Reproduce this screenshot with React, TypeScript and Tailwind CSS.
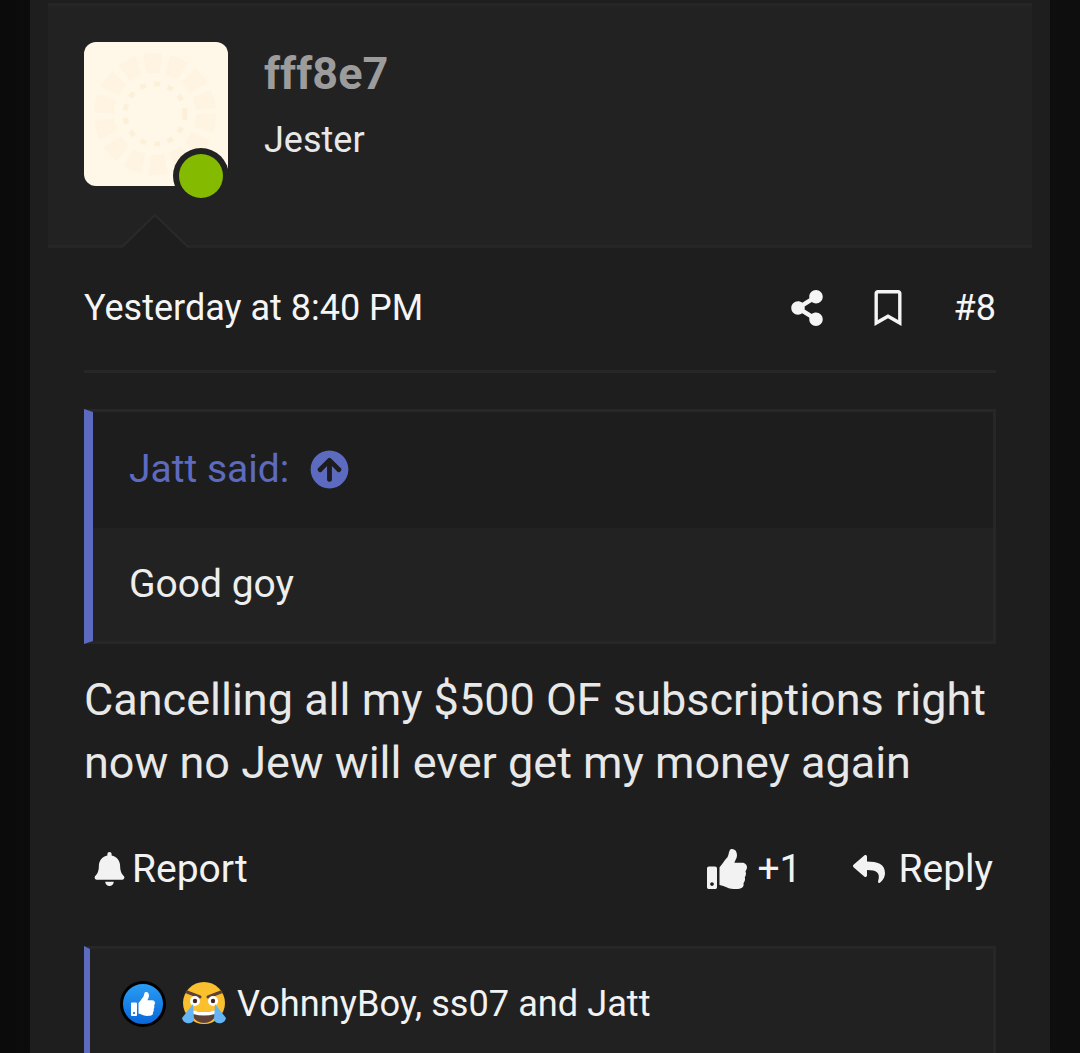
import { FaArrowCircleUp, FaBell, FaRegBookmark, FaReply, FaShareAlt, FaThumbsUp } from "react-icons/fa";

function Avatar() {
  return (
    <div className="relative h-[144px] w-[144px] shrink-0">
      <div className="h-full w-full overflow-hidden rounded-[12px] bg-[#fff7e8]">
        <svg viewBox="0 0 144 144" className="h-full w-full" fill="none">
          <circle cx="71" cy="72" r="30" stroke="#fdf0d8" strokeWidth="5" strokeDasharray="6 8" />
          <circle cx="71" cy="72" r="51" stroke="#fef4e1" strokeWidth="20" strokeDasharray="16 7" />
        </svg>
      </div>
      <span className="absolute bottom-[-18px] right-[-1px] flex h-[56px] w-[56px] items-center justify-center rounded-full bg-[#222222]">
        <span className="h-[44px] w-[44px] rounded-full bg-[#84bb00]" />
      </span>
    </div>
  );
}

function AuthorHeader() {
  return (
    <header className="relative flex h-[245px] gap-[36px] border-y-[3px] border-[#262626] bg-[#222222] px-[36px] pt-[36px]">
      <Avatar />
      <div className="pt-[4px]">
        <h3 className="text-[45px] font-bold leading-[56px] text-[#9c9c9c]">fff8e7</h3>
        <p className="mt-[16px] text-[36px] leading-[44px] text-[#e8e8e8]">Jester</p>
      </div>
      <svg viewBox="0 0 66 34" className="absolute bottom-[-3px] left-[74px] h-[34px] w-[66px]">
        <path d="M0 34 L33 1 L66 34 Z" fill="#1e1e1e" />
        <path d="M0 33 L33 1 L66 33" fill="none" stroke="#2a2a2a" strokeWidth="2" />
      </svg>
    </header>
  );
}

function QuoteBlock() {
  return (
    <blockquote className="mt-[36px] border-[3px] border-l-[9px] border-[#272727] border-l-[#5c6bc0]">
      <div className="flex h-[116px] items-center gap-[21px] bg-[#1d1d1d] pb-[2px] pl-[36px] text-[39px] text-[#5c6bc0]">
        <span>Jatt said:</span>
        <FaArrowCircleUp className="h-[39px] w-[39px]" />
      </div>
      <div className="flex h-[113px] items-center bg-[#222222] pl-[36px] text-[39px] text-[#eeeeee]">
        Good goy
      </div>
    </blockquote>
  );
}

function LaughEmoji() {
  return (
    <svg viewBox="0 0 46 46" className="h-[46px] w-[46px]">
      <circle cx="23" cy="22" r="21" fill="#fbc02d" />
      <path d="M6 11 L19 16 M40 11 L27 16" stroke="#5d4037" strokeWidth="3" strokeLinecap="round" />
      <circle cx="14" cy="20" r="5" fill="#ffffff" />
      <circle cx="32" cy="20" r="5" fill="#ffffff" />
      <circle cx="14" cy="20" r="2.2" fill="#3e2723" />
      <circle cx="32" cy="20" r="2.2" fill="#3e2723" />
      <path d="M10 29 Q23 33 36 29 Q34 42 23 42 Q12 42 10 29 Z" fill="#5d4037" />
      <path d="M11 29 Q23 33 35 29 L34 33 Q23 36 12 33 Z" fill="#ffffff" />
      <path d="M12 23 L1 37 A6.5 6.5 0 0 0 13 39 Z" fill="#64b5f6" />
      <path d="M34 23 L45 37 A6.5 6.5 0 0 1 33 39 Z" fill="#64b5f6" />
    </svg>
  );
}

export default function App() {
  return (
    <div className="h-[1053px] w-[1080px] overflow-hidden bg-gradient-to-r from-[#0b0b0b] via-[#121212] to-[#0e0e0e] px-[30px] font-['Roboto',sans-serif]">
      <article className="h-full bg-[#1e1e1e] px-[18px] pt-[3px]">
        <AuthorHeader />

        <div className="px-[36px]">
          <div className="flex h-[125px] items-center justify-between border-b-[3px] border-[#272727] pb-[2px] text-[#f5f5f5]">
            <span className="text-[36px]">Yesterday at 8:40 PM</span>
            <div className="flex items-center">
              <FaShareAlt className="h-[36px] w-[32px]" />
              <FaRegBookmark className="ml-[51px] h-[36px] w-[28px]" />
              <span className="ml-[52px] text-[36px]">#8</span>
            </div>
          </div>

          <QuoteBlock />

          <p className="mt-[24px] text-[45px] leading-[63px] text-[#e8e8e8]">
            Cancelling all my $500 OF subscriptions right now no Jew will ever get my money again
          </p>

          <div className="mt-[46px] flex items-center justify-between text-[39px] text-[#f2f2f2]">
            <span className="flex items-center gap-[7px] pl-[10px]">
              <FaBell className="h-[34px] w-[31px]" />
              Report
            </span>
            <div className="flex items-center pr-[3px]">
              <FaThumbsUp className="h-[40px] w-[40px]" />
              <span className="ml-[10px]">+1</span>
              <FaReply className="ml-[50px] h-[32px] w-[36px]" />
              <span className="ml-[11px]">Reply</span>
            </div>
          </div>

          <div className="mt-[47px] flex h-[120px] items-start gap-[15px] border-l-[6px] border-t-[3px] border-r-[3px] border-[#272727] border-l-[#5c6bc0] bg-[#212121] pl-[30px] pt-[32px] text-[36.2px] text-[#f2f2f2]">
            <span className="flex h-[46px] w-[46px] items-center justify-center rounded-full border-[3px] border-black bg-gradient-to-b from-[#2a9df4] to-[#0a66d8]">
              <FaThumbsUp className="h-[24px] w-[24px] text-white" />
            </span>
            <LaughEmoji />
            <span className="ml-[-5px] leading-[46px]">VohnnyBoy, ss07 and Jatt</span>
          </div>
        </div>
      </article>
    </div>
  );
}
